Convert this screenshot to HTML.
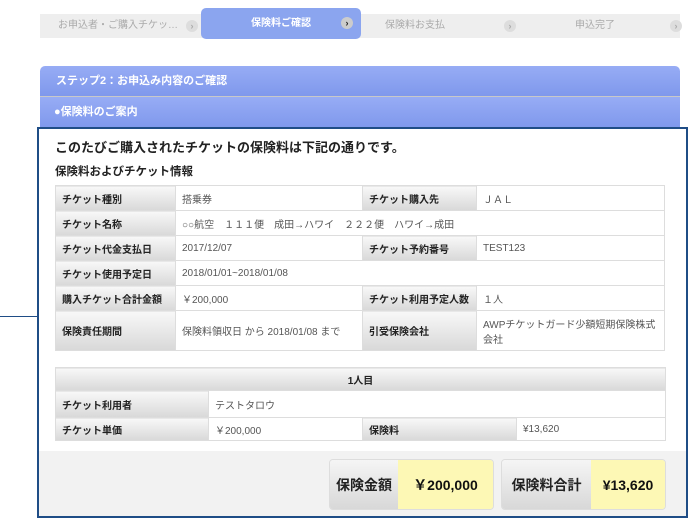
<!DOCTYPE html>
<html><head><meta charset="utf-8"><style>
*{margin:0;padding:0;box-sizing:border-box}
body{width:688px;height:524px;background:#fff;font-family:"Liberation Sans","Noto Sans CJK JP",sans-serif;font-size:11px;color:#333;position:relative;overflow:hidden}
.abs{position:absolute}
.bar{left:40px;top:14px;width:640px;height:24px;background:#eee}
.tab{top:14px;height:24px;color:#aaa;font-size:10px;line-height:24px;text-align:center}
.arr{width:12px;height:12px;border-radius:50%;background:#ddd;color:#aaa;font-size:9px;line-height:12px;text-align:center;font-weight:bold}
.act{left:201px;top:8px;width:160px;height:31px;background:#8ba5ef;border-radius:5px;color:#fff;font-size:10px;line-height:31px;font-weight:bold}
.hd{left:40px;width:640px;background:linear-gradient(#97acf5,#7f98ec);color:#fff;font-weight:bold;font-size:11px;padding-left:16px}
.box{left:37px;top:127px;width:651px;height:391px;border:2px solid #1f4d86;background:#fff}
table{border-collapse:collapse;position:absolute;font-size:10px}
td{border:1px solid #ddd;padding:0 6px;vertical-align:middle}
td.l{background:linear-gradient(#f8f8f8,#d8d8d8);font-weight:bold;color:#222}
td.v{background:#fff;color:#555}
.tot{height:51px;border:1px solid #ddd;border-radius:4px;overflow:hidden;display:flex;font-weight:bold;font-size:14px}
.tot .a{background:linear-gradient(#f5f5f5,#d8d8d8);display:flex;align-items:center;justify-content:center;color:#222}
.tot .b{background:#fdf8b5;display:flex;align-items:center;justify-content:center;color:#111}
</style></head><body>
<div class="abs bar"></div>
<div class="abs tab" style="left:48px;width:140px">お申込者・ご購入チケッ…</div>
<div class="abs arr" style="left:186px;top:20px">›</div>
<div class="abs act" style="text-align:center">保険料ご確認</div>
<div class="abs arr" style="left:341px;top:17px;background:#ccc;color:#222">›</div>
<div class="abs tab" style="left:370px;width:90px">保険料お支払</div>
<div class="abs arr" style="left:504px;top:20px">›</div>
<div class="abs tab" style="left:540px;width:110px">申込完了</div>
<div class="abs arr" style="left:670px;top:20px">›</div>

<div class="abs hd" style="top:66px;height:30px;line-height:30px;border-radius:5px 5px 0 0">ステップ2：お申込み内容のご確認</div>
<div class="abs" style="left:40px;top:96px;width:640px;height:1px;background:#c8c8c8"></div>
<div class="abs hd" style="top:97px;height:31px;line-height:31px;padding-left:14px">●保険料のご案内</div>
<div class="abs" style="left:0;top:316px;width:37px;height:1px;background:#1f4d86"></div>

<div class="abs box">
 <div class="abs" style="left:0;top:322px;width:647px;height:65px;background:#f2f2f2"></div>
</div>
<div class="abs" style="left:55px;top:137px;font-size:13px;font-weight:bold;color:#222">このたびご購入されたチケットの保険料は下記の通りです。</div>
<div class="abs" style="left:55px;top:163px;font-size:11.5px;font-weight:bold;color:#222">保険料およびチケット情報</div>

<table style="left:55px;top:185px;width:610px">
<tr style="height:25px"><td class="l" style="width:120px">チケット種別</td><td class="v" style="width:187px">搭乗券</td><td class="l" style="width:114px">チケット購入先</td><td class="v">ＪＡＬ</td></tr>
<tr style="height:25px"><td class="l">チケット名称</td><td class="v" colspan="3">○○航空　１１１便　成田→ハワイ　２２２便　ハワイ→成田</td></tr>
<tr style="height:25px"><td class="l">チケット代金支払日</td><td class="v">2017/12/07</td><td class="l">チケット予約番号</td><td class="v">TEST123</td></tr>
<tr style="height:25px"><td class="l">チケット使用予定日</td><td class="v" colspan="3">2018/01/01~2018/01/08</td></tr>
<tr style="height:25px"><td class="l">購入チケット合計金額</td><td class="v">￥200,000</td><td class="l">チケット利用予定人数</td><td class="v">１人</td></tr>
<tr style="height:40px"><td class="l">保険責任期間</td><td class="v">保険料領収日 から 2018/01/08 まで</td><td class="l">引受保険会社</td><td class="v">AWPチケットガード少額短期保険株式会社</td></tr>
</table>

<table style="left:55px;top:367px;width:611px">
<tr style="height:23px"><td class="l" colspan="4" style="text-align:center">1人目</td></tr>
<tr style="height:27px"><td class="l" style="width:153px">チケット利用者</td><td class="v" colspan="3">テストタロウ</td></tr>
<tr style="height:23px"><td class="l">チケット単価</td><td class="v" style="width:154px">￥200,000</td><td class="l" style="width:154px">保険料</td><td class="v">¥13,620</td></tr>
</table>

<div class="abs tot" style="left:329px;top:459px;width:165px"><div class="a" style="width:68px">保険金額</div><div class="b" style="flex:1">￥200,000</div></div>
<div class="abs tot" style="left:501px;top:459px;width:165px"><div class="a" style="width:89px">保険料合計</div><div class="b" style="flex:1">¥13,620</div></div>
</body></html>
